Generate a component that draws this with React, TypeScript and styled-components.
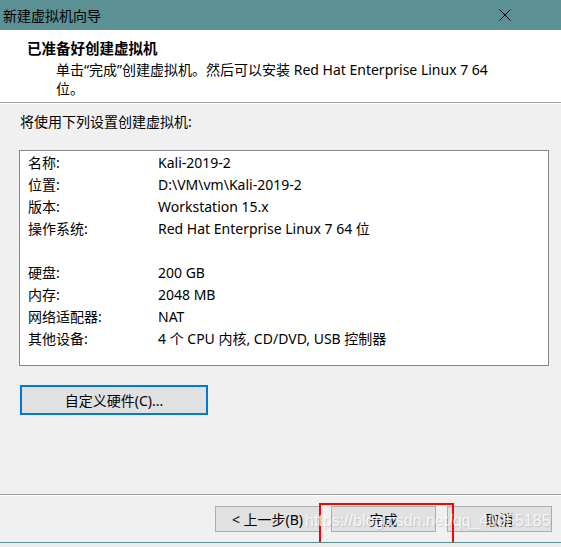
import React from "react";
import styled, { createGlobalStyle } from "styled-components";

const Global = createGlobalStyle`
  html, body { margin: 0; padding: 0; background: #ececec; }
  body {
    font-family: "Noto Sans", "Noto Sans CJK SC", sans-serif;
    color: #000;
  }
  * { box-sizing: border-box; }
`;

const Window = styled.div`
  position: relative;
  width: 561px;
  height: 543px;
  display: flex;
  flex-direction: column;
  background: #f0f0f0;
  border-bottom: 1px solid #5b9095;
  overflow: hidden;
`;

const TitleBar = styled.div`
  height: 30px;
  flex: none;
  background: #5b9095;
  display: flex;
  align-items: center;
  justify-content: space-between;
  padding: 0 50px 0 3px;
  font-size: 14px;
  color: #000;
`;

const CloseIcon = () => (
  <svg width="12" height="12" viewBox="0 0 12 12">
    <path d="M0.5 0.5 L11.5 11.5 M11.5 0.5 L0.5 11.5" stroke="#000" strokeWidth="1" />
  </svg>
);

const Header = styled.div`
  flex: none;
  height: 73px;
  background: #fff;
  border-bottom: 1px solid #a0a0a0;
  box-shadow: 0 1px 0 #fff;
  padding: 8px 0 0 27px;
`;

const HeaderTitle = styled.div`
  font-size: 14.5px;
  font-weight: bold;
  line-height: 20px;
  margin-bottom: 2px;
`;

const HeaderSub = styled.div`
  font-size: 14px;
  line-height: 19px;
  padding-left: 29px;
  width: 470px;
`;

const Body = styled.div`
  flex: 1;
  display: flex;
  flex-direction: column;
  padding: 9px 12px 0 19px;
`;

const Intro = styled.div`
  font-size: 14px;
  line-height: 20px;
  padding-left: 1px;
  margin-bottom: 18px;
`;

const SummaryBox = styled.div`
  width: 530px;
  height: 216px;
  background: #fff;
  border: 1px solid #828790;
  padding: 0 0 0 8px;
`;

const Row = styled.div`
  display: grid;
  grid-template-columns: 130px 1fr;
  height: 22px;
  align-items: center;
  font-size: 14px;
  white-space: nowrap;
`;

const CustomButton = styled.button`
  margin-top: 19px;
  margin-left: 1px;
  width: 188px;
  height: 30px;
  background: #e1e1e1;
  border: 2px solid #0078d7;
  font-family: inherit;
  font-size: 14px;
  color: #000;
  padding: 0;
`;

const Footer = styled.div`
  flex: none;
  height: 48px;
  border-top: 1px solid #a0a0a0;
  box-shadow: inset 0 1px 0 #fff;
  display: flex;
  justify-content: flex-end;
  align-items: flex-start;
  gap: 11px;
  padding: 11px 9px 0 0;
`;

const DlgButton = styled.button`
  width: 105px;
  height: 26px;
  background: #e1e1e1;
  border: 1px solid #adadad;
  font-family: inherit;
  font-size: 14px;
  color: #000;
  padding: 0;
`;

const Annotation = styled.div`
  position: absolute;
  left: 319px;
  top: 503px;
  width: 135px;
  height: 42px;
  border: 2px solid #ff0000;
  pointer-events: none;
`;

const Watermark = styled.div`
  position: absolute;
  left: 305px;
  top: 512px;
  font-family: "Liberation Sans", Arial, sans-serif;
  font-size: 16px;
  color: rgba(255, 255, 255, 0.8);
  text-shadow: 1px 1px 1px rgba(140, 140, 140, 0.35);
  pointer-events: none;
  white-space: nowrap;
`;

const rows: [string, string][] = [
  ["名称:", "Kali-2019-2"],
  ["位置:", "D:\\VM\\vm\\Kali-2019-2"],
  ["版本:", "Workstation 15.x"],
  ["操作系统:", "Red Hat Enterprise Linux 7 64 位"],
  ["", ""],
  ["硬盘:", "200 GB"],
  ["内存:", "2048 MB"],
  ["网络适配器:", "NAT"],
  ["其他设备:", "4 个 CPU 内核, CD/DVD, USB 控制器"],
];

export default function App() {
  return (
    <>
      <Global />
      <Window>
        <TitleBar>
          <span>新建虚拟机向导</span>
          <CloseIcon />
        </TitleBar>
        <Header>
          <HeaderTitle>已准备好创建虚拟机</HeaderTitle>
          <HeaderSub>单击“完成”创建虚拟机。然后可以安装 Red Hat Enterprise Linux 7 64 位。</HeaderSub>
        </Header>
        <Body>
          <Intro>将使用下列设置创建虚拟机:</Intro>
          <SummaryBox>
            {rows.map(([k, v], i) => (
              <Row key={i}>
                <span>{k}</span>
                <span>{v}</span>
              </Row>
            ))}
          </SummaryBox>
          <CustomButton>自定义硬件(C)...</CustomButton>
        </Body>
        <Footer>
          <DlgButton>&lt; 上一步(B)</DlgButton>
          <DlgButton>完成</DlgButton>
          <DlgButton>取消</DlgButton>
        </Footer>
        <Annotation />
        <Watermark>https://blog.csdn.net/qq_40055185</Watermark>
      </Window>
    </>
  );
}
